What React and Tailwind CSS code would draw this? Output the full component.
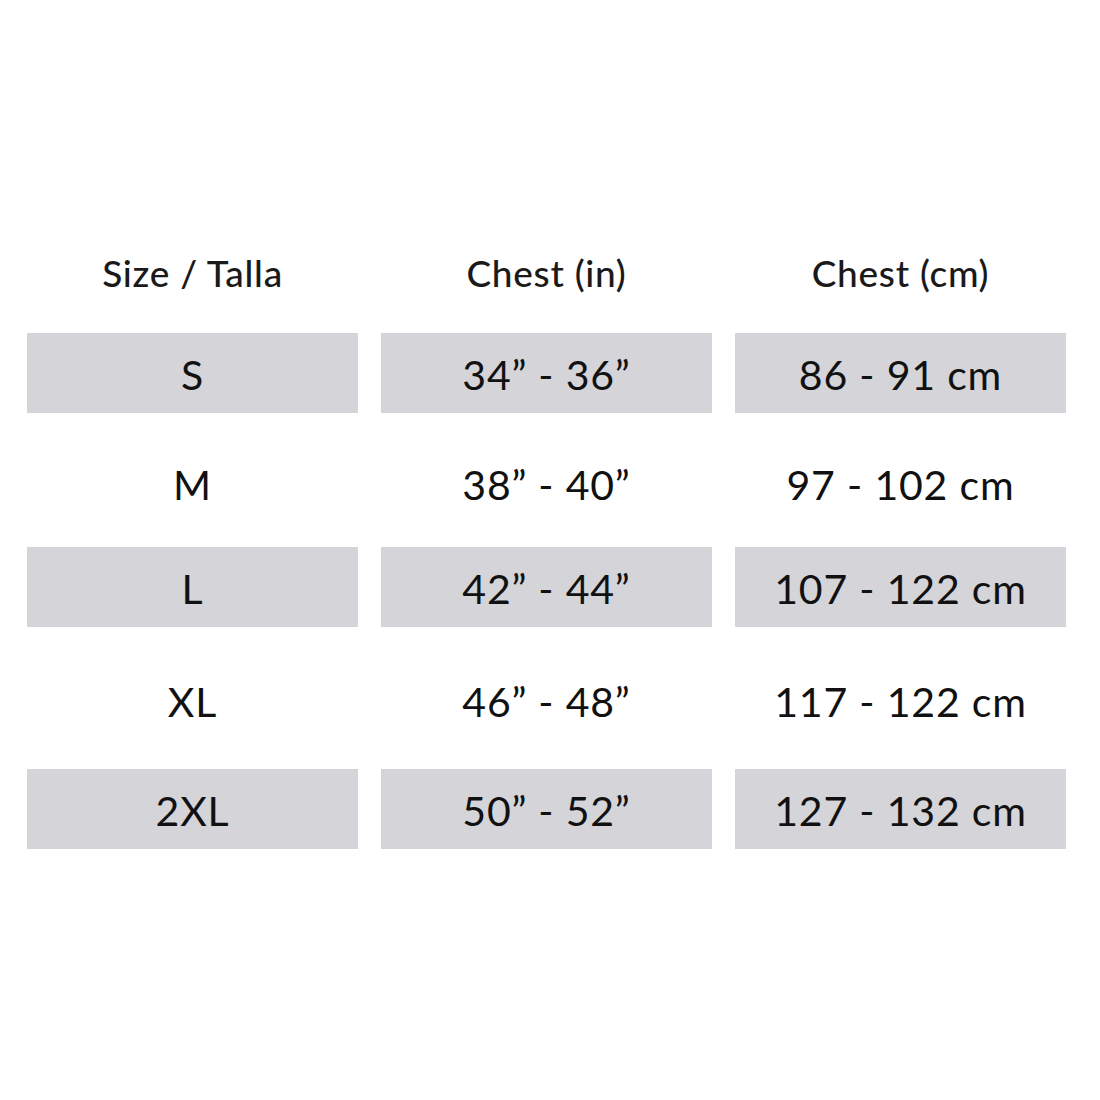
const rows = [
  { size: 'S', inch: '34” - 36”', cm: '86 - 91 cm', shaded: true, gap: 'mt-0' },
  { size: 'M', inch: '38” - 40”', cm: '97 - 102 cm', shaded: false, gap: 'mt-[30px]' },
  { size: 'L', inch: '42” - 44”', cm: '107 - 122 cm', shaded: true, gap: 'mt-[24px]' },
  { size: 'XL', inch: '46” - 48”', cm: '117 - 122 cm', shaded: false, gap: 'mt-[33px]' },
  { size: '2XL', inch: '50” - 52”', cm: '127 - 132 cm', shaded: true, gap: 'mt-[29px]' },
]

const Cell = ({ children, shaded }) => (
  <div
    className={`h-[80px] flex items-center justify-center pt-[4px] text-[41px] tracking-[0.02em] text-[#111] ${
      shaded ? 'bg-[#d4d4d9]' : ''
    }`}
  >
    {children}
  </div>
)

export default function App() {
  return (
    <div className="w-[1100px] h-[1100px] bg-white font-['Lato','Open_Sans',sans-serif]">
      <div className="pt-[246px] pl-[27px] w-[1066px]">
        <div className="grid grid-cols-3 gap-x-[23px] text-[37px] font-medium tracking-[0.02em] text-[#1a1a1a]">
          <div className="h-[54px] flex items-center justify-center">Size / Talla</div>
          <div className="h-[54px] flex items-center justify-center">Chest (in)</div>
          <div className="h-[54px] flex items-center justify-center">Chest (cm)</div>
        </div>
        <div className="mt-[33px] flex flex-col">
          {rows.map((r) => (
            <div key={r.size} className={`grid grid-cols-3 gap-x-[23px] ${r.gap}`}>
              <Cell shaded={r.shaded}>{r.size}</Cell>
              <Cell shaded={r.shaded}>{r.inch}</Cell>
              <Cell shaded={r.shaded}>{r.cm}</Cell>
            </div>
          ))}
        </div>
      </div>
    </div>
  )
}
